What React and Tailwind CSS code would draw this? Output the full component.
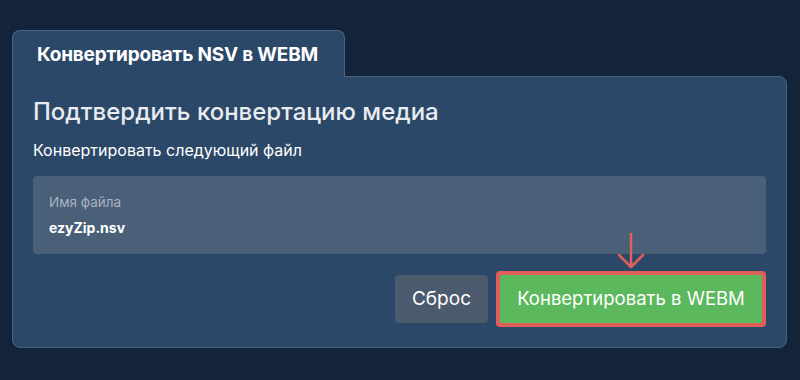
export default function App() {
  return (
    <div className="min-h-screen w-full bg-[#12233a] px-3 pt-[30px]" style={{ fontFamily: "Inter, 'Noto Sans', sans-serif" }}>
      <div className="w-[775px]">
        {/* Tab */}
        <div className="relative z-10 -mb-px flex h-[47px] w-[333px] items-center rounded-t-lg border border-b-0 border-[#4b6485] bg-[#2c4868] pl-6 pt-[3px]">
          <span className="text-[19px] font-bold tracking-[-0.2px] text-white">Конвертировать NSV в WEBM</span>
        </div>

        {/* Card */}
        <div className="rounded-b-lg rounded-tr-lg border border-[#4b6485] bg-[#2c4868] px-5 pb-5 pt-[19px]">
          <h2 className="text-[24px] font-medium leading-[32px] text-[#e8ecf1]">Подтвердить конвертацию медиа</h2>
          <p className="mt-[12px] text-[16px] leading-5 text-white">Конвертировать следующий файл</p>

          <div className="mt-[16px] flex h-[78px] flex-col justify-center rounded bg-[#4a5f78] px-4">
            <div className="text-[13.5px] leading-5 text-[#a9b3c0]">Имя файла</div>
            <div className="mt-[6px] text-[14px] font-bold leading-5 text-white">ezyZip.nsv</div>
          </div>

          <div className="mt-[17px] flex items-center justify-end gap-2">
            <button className="flex h-[48px] w-[93px] items-center justify-center rounded bg-[#4b5a6d] text-[19px] text-white">
              Сброс
            </button>
            <div className="relative">
              <svg className="absolute left-[121px] top-[-38px]" width="28" height="36" viewBox="0 0 28 36" fill="none">
                <path d="M14 1 V34 M2 22 L14 34 L26 22" stroke="#e0605a" strokeWidth="2.5" strokeLinecap="round" strokeLinejoin="round" />
              </svg>
              <button className="flex h-[56px] w-[270px] items-center justify-center rounded border-4 border-[#de5f5a] bg-[#5cb85c] text-[18.5px] text-white">
                Конвертировать в WEBM
              </button>
            </div>
          </div>
        </div>
      </div>
    </div>
  );
}
